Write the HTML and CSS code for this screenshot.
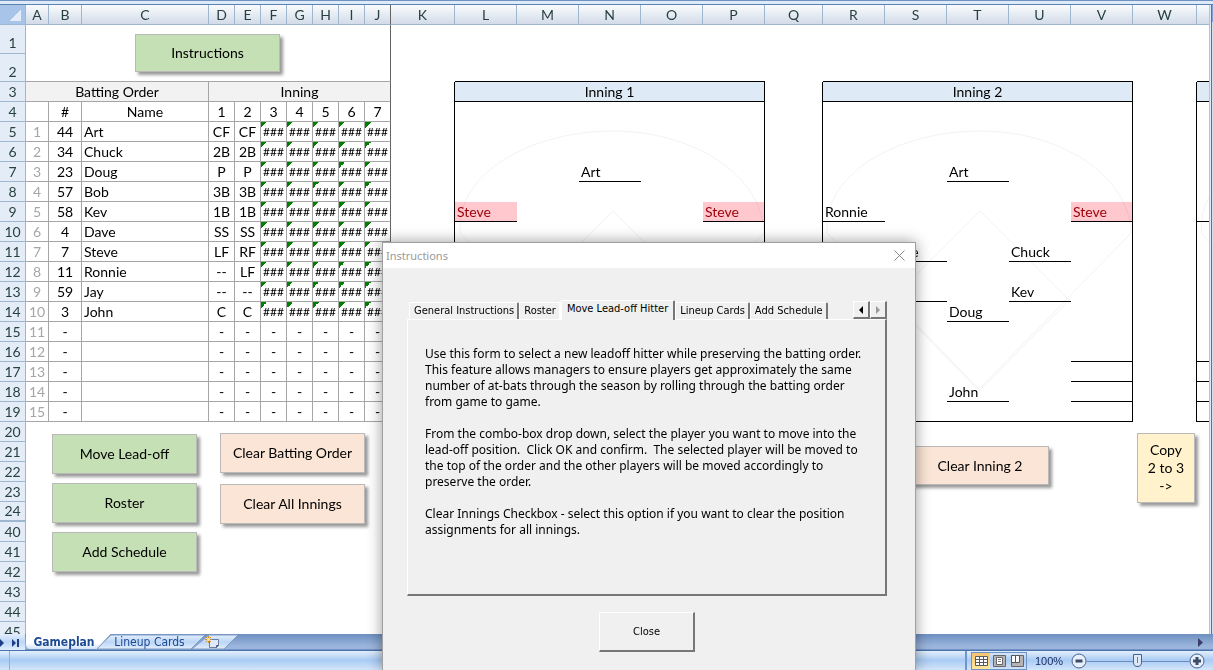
FILE: index.html
```html
<!DOCTYPE html>
<html lang="en">
<head>
<meta charset="utf-8">
<title>Gameplan</title>
<link rel="stylesheet" href="styles.css">
</head>
<body>
<div class="app">
<div class="ribbon-edge"></div>
<main class="workspace">
<div class="sheet">
<table class="grid">
<colgroup>
<col class="w-head"><col class="w-a"><col class="w-b"><col class="w-c">
<col class="w-d"><col class="w-d"><col class="w-d"><col class="w-d"><col class="w-d"><col class="w-d"><col class="w-d">
<col class="w-k"><col class="w-l"><col class="w-l"><col class="w-l"><col class="w-l"><col class="w-l">
<col class="w-q"><col class="w-l"><col class="w-l"><col class="w-l"><col class="w-l"><col class="w-l">
<col class="w-k"><col>
</colgroup>
<thead>
<tr class="cols"><th class="corner"></th><th>A</th><th>B</th><th>C</th><th>D</th><th>E</th><th>F</th><th>G</th><th>H</th><th>I</th><th class="freeze">J</th><th>K</th><th>L</th><th>M</th><th>N</th><th>O</th><th>P</th><th>Q</th><th>R</th><th>S</th><th>T</th><th>U</th><th>V</th><th>W</th><th class="last"></th></tr>
</thead>
<tbody>
<tr class="tall"><th>1</th><td class="freeze" colspan="10"></td><td colspan="14"></td></tr>
<tr class="tall2"><th>2</th><td class="gb freeze" colspan="10"></td><td></td><td class="ul" colspan="5"></td><td></td><td class="ul" colspan="5"></td><td></td><td class="ul"></td></tr>
<tr><th>3</th><td class="g title" colspan="3">Batting Order</td><td class="g title freeze" colspan="7">Inning</td><td class="edge"></td><td class="inning" colspan="5">Inning 1</td><td class="edge"></td><td class="inning" colspan="5">Inning 2</td><td class="edge"></td><td class="inning cut"></td></tr>
<tr><th>4</th><td class="g"></td><td class="g">#</td><td class="g">Name</td><td class="g">1</td><td class="g">2</td><td class="g">3</td><td class="g">4</td><td class="g">5</td><td class="g">6</td><td class="g freeze">7</td><td class="edge"></td><td class="edge" colspan="5"></td><td class="edge"></td><td class="edge" colspan="5"></td><td class="edge"></td><td></td></tr>
<tr><th>5</th><td class="g n">1</td><td class="g">44</td><td class="g nm">Art</td><td class="g">CF</td><td class="g">CF</td><td class="g err">###</td><td class="g err">###</td><td class="g err">###</td><td class="g err">###</td><td class="g err freeze">###</td><td class="edge"></td><td class="edge" colspan="5"></td><td class="edge"></td><td class="edge" colspan="5"></td><td class="edge"></td><td></td></tr>
<tr><th>6</th><td class="g n">2</td><td class="g">34</td><td class="g nm">Chuck</td><td class="g">2B</td><td class="g">2B</td><td class="g err">###</td><td class="g err">###</td><td class="g err">###</td><td class="g err">###</td><td class="g err freeze">###</td><td class="edge"></td><td class="edge" colspan="5"></td><td class="edge"></td><td class="edge" colspan="5"></td><td class="edge"></td><td></td></tr>
<tr><th>7</th><td class="g n">3</td><td class="g">23</td><td class="g nm">Doug</td><td class="g">P</td><td class="g">P</td><td class="g err">###</td><td class="g err">###</td><td class="g err">###</td><td class="g err">###</td><td class="g err freeze">###</td><td class="edge"></td><td colspan="2"></td><td class="pos">Art</td><td class="edge" colspan="2"></td><td class="edge"></td><td colspan="2"></td><td class="pos">Art</td><td class="edge" colspan="2"></td><td class="edge"></td><td></td></tr>
<tr><th>8</th><td class="g n">4</td><td class="g">57</td><td class="g nm">Bob</td><td class="g">3B</td><td class="g">3B</td><td class="g err">###</td><td class="g err">###</td><td class="g err">###</td><td class="g err">###</td><td class="g err freeze">###</td><td class="edge"></td><td class="edge" colspan="5"></td><td class="edge"></td><td class="edge" colspan="5"></td><td class="edge"></td><td></td></tr>
<tr><th>9</th><td class="g n">5</td><td class="g">58</td><td class="g nm">Kev</td><td class="g">1B</td><td class="g">1B</td><td class="g err">###</td><td class="g err">###</td><td class="g err">###</td><td class="g err">###</td><td class="g err freeze">###</td><td class="edge"></td><td class="pos dup">Steve</td><td colspan="3"></td><td class="pos dup edge">Steve</td><td class="edge"></td><td class="pos">Ronnie</td><td colspan="3"></td><td class="pos dup edge">Steve</td><td class="edge"></td><td class="ul"></td></tr>
<tr><th>10</th><td class="g n">6</td><td class="g">4</td><td class="g nm">Dave</td><td class="g">SS</td><td class="g">SS</td><td class="g err">###</td><td class="g err">###</td><td class="g err">###</td><td class="g err">###</td><td class="g err freeze">###</td><td class="edge"></td><td class="edge" colspan="5"></td><td class="edge"></td><td class="edge" colspan="5"></td><td class="edge"></td><td></td></tr>
<tr><th>11</th><td class="g n">7</td><td class="g">7</td><td class="g nm">Steve</td><td class="g">LF</td><td class="g">RF</td><td class="g err">###</td><td class="g err">###</td><td class="g err">###</td><td class="g err">###</td><td class="g err freeze">###</td><td class="edge"></td><td class="edge" colspan="5"></td><td class="edge"></td><td></td><td class="pos">Dave</td><td></td><td class="pos">Chuck</td><td class="edge"></td><td class="edge"></td><td></td></tr>
<tr><th>12</th><td class="g n">8</td><td class="g">11</td><td class="g nm">Ronnie</td><td class="g">--</td><td class="g">LF</td><td class="g err">###</td><td class="g err">###</td><td class="g err">###</td><td class="g err">###</td><td class="g err freeze">###</td><td class="edge"></td><td class="edge" colspan="5"></td><td class="edge"></td><td class="edge" colspan="5"></td><td class="edge"></td><td></td></tr>
<tr><th>13</th><td class="g n">9</td><td class="g">59</td><td class="g nm">Jay</td><td class="g">--</td><td class="g">--</td><td class="g err">###</td><td class="g err">###</td><td class="g err">###</td><td class="g err">###</td><td class="g err freeze">###</td><td class="edge"></td><td class="edge" colspan="5"></td><td class="edge"></td><td></td><td class="pos"></td><td></td><td class="pos">Kev</td><td class="edge"></td><td class="edge"></td><td></td></tr>
<tr><th>14</th><td class="g n">10</td><td class="g">3</td><td class="g nm">John</td><td class="g">C</td><td class="g">C</td><td class="g err">###</td><td class="g err">###</td><td class="g err">###</td><td class="g err">###</td><td class="g err freeze">###</td><td class="edge"></td><td class="edge" colspan="5"></td><td class="edge"></td><td colspan="2"></td><td class="pos">Doug</td><td class="edge" colspan="2"></td><td class="edge"></td><td></td></tr>
<tr><th>15</th><td class="g n">11</td><td class="g">-</td><td class="g"></td><td class="g">-</td><td class="g">-</td><td class="g">-</td><td class="g">-</td><td class="g">-</td><td class="g">-</td><td class="g freeze">-</td><td class="edge"></td><td class="edge" colspan="5"></td><td class="edge"></td><td class="edge" colspan="5"></td><td class="edge"></td><td></td></tr>
<tr><th>16</th><td class="g n">12</td><td class="g">-</td><td class="g"></td><td class="g">-</td><td class="g">-</td><td class="g">-</td><td class="g">-</td><td class="g">-</td><td class="g">-</td><td class="g freeze">-</td><td class="edge"></td><td class="edge" colspan="5"></td><td class="edge"></td><td colspan="4"></td><td class="ul edge"></td><td class="edge"></td><td class="ul"></td></tr>
<tr><th>17</th><td class="g n">13</td><td class="g">-</td><td class="g"></td><td class="g">-</td><td class="g">-</td><td class="g">-</td><td class="g">-</td><td class="g">-</td><td class="g">-</td><td class="g freeze">-</td><td class="edge"></td><td class="edge" colspan="5"></td><td class="edge"></td><td colspan="4"></td><td class="ul edge"></td><td class="edge"></td><td class="ul"></td></tr>
<tr><th>18</th><td class="g n">14</td><td class="g">-</td><td class="g"></td><td class="g">-</td><td class="g">-</td><td class="g">-</td><td class="g">-</td><td class="g">-</td><td class="g">-</td><td class="g freeze">-</td><td class="edge"></td><td class="edge" colspan="5"></td><td class="edge"></td><td colspan="2"></td><td class="pos">John</td><td></td><td class="ul edge"></td><td class="edge"></td><td class="ul"></td></tr>
<tr><th>19</th><td class="g n">15</td><td class="g">-</td><td class="g"></td><td class="g">-</td><td class="g">-</td><td class="g">-</td><td class="g">-</td><td class="g">-</td><td class="g">-</td><td class="g freeze">-</td><td class="edge"></td><td class="ul edge" colspan="5"></td><td class="edge"></td><td class="ul edge" colspan="5"></td><td class="edge"></td><td class="ul"></td></tr>
<tr><th>20</th><td class="freeze" colspan="10"></td><td colspan="14"></td></tr>
<tr><th>21</th><td class="freeze" colspan="10"></td><td colspan="14"></td></tr>
<tr><th>22</th><td class="freeze" colspan="10"></td><td colspan="14"></td></tr>
<tr><th>23</th><td class="freeze" colspan="10"></td><td colspan="14"></td></tr>
<tr><th class="hidden-rows">24</th><td class="freeze" colspan="10"></td><td colspan="14"></td></tr>
<tr><th>40</th><td class="freeze" colspan="10"></td><td colspan="14"></td></tr>
<tr><th>41</th><td class="freeze" colspan="10"></td><td colspan="14"></td></tr>
<tr><th>42</th><td class="freeze" colspan="10"></td><td colspan="14"></td></tr>
<tr><th>43</th><td class="freeze" colspan="10"></td><td colspan="14"></td></tr>
<tr><th>44</th><td class="freeze" colspan="10"></td><td colspan="14"></td></tr>
<tr><th>45</th><td class="freeze" colspan="10"></td><td colspan="14"></td></tr>
</tbody>
</table>

<svg class="field field-1" width="310" height="290" viewBox="0 0 310 290" aria-hidden="true"><path d="M5 132V122C8 70 78 30 158 30S306 74 309 130M5 132L158 288L309 132M158 110L247 199L158 290L69 199Z"/></svg>
<svg class="field field-2" width="310" height="290" viewBox="0 0 310 290" aria-hidden="true"><path d="M4 132V122C7 70 77 30 157 30S305 74 308 130M4 132L156 288L310 130M157 110L246 199L156 290L68 199Z"/></svg>
<svg class="field field-3" width="12" height="290" viewBox="0 0 12 290" aria-hidden="true"><path d="M12 96Q4 110 4 132L12 141"/></svg>

<button class="shape green at-instructions">Instructions</button>
<div class="stack at-green">
<button class="shape green">Move Lead-off</button>
<button class="shape green">Roster</button>
<button class="shape green">Add Schedule</button>
</div>
<div class="stack wide at-orange">
<button class="shape orange">Clear Batting Order</button>
<button class="shape orange">Clear All Innings</button>
</div>
<button class="shape orange at-clear">Clear Inning 2</button>
<button class="shape yellow at-copy">Copy<br>2 to 3<br>-&gt;</button>
</div>
<div class="vscroll"></div>
</main>

<nav class="sheet-tabs">
<svg class="tab-shapes" width="240" height="17" viewBox="0 0 240 17" aria-hidden="true">
<defs>
<linearGradient id="tabBlue" x1="0" y1="0" x2="0" y2="1"><stop offset="0" stop-color="#e3eefc"/><stop offset=".5" stop-color="#bcd6f7"/><stop offset="1" stop-color="#e2eefd"/></linearGradient>
<linearGradient id="tabWhite" x1="0" y1="0" x2="0" y2="1"><stop offset="0" stop-color="#fff"/><stop offset=".6" stop-color="#fff"/><stop offset="1" stop-color="#cfe2fa"/></linearGradient>
</defs>
<path d="M192 15L209 1H238L224 15Z" fill="url(#tabBlue)" stroke="#7f9cc7"/>
<path d="M96 15L111 1H205L191 15Z" fill="url(#tabBlue)" stroke="#7f9cc7"/>
<path d="M26 0H111L97 15H30Q27 15 26 11Z" fill="url(#tabWhite)"/>
<path d="M111 0L97 15" stroke="#7f9cc7"/>
<path d="M0 0H25V16H0Z" fill="url(#tabBlue)"/>
</svg>
<button class="nav" aria-label="Next sheet"><svg width="4" height="8" viewBox="0 0 4 8"><path d="M0 0L4 4L0 8Z" fill="#1d3f86"/></svg></button>
<button class="nav" aria-label="Last sheet"><svg width="8" height="8" viewBox="0 0 8 8"><path d="M0 0L4 4L0 8ZM5 0H7V8H5Z" fill="#1d3f86"/></svg></button>
<button class="tab current">Gameplan</button>
<button class="tab">Lineup Cards</button>
<button class="tab new" aria-label="Insert worksheet"><svg width="16" height="14" viewBox="0 0 16 14"><path d="M4.500 3.500H13.500V9.500L11.500 11.500H4.500Z" fill="#dfe9f8" stroke="#6a7da2"/><path d="M13.500 9.500H11.500V11.500" fill="none" stroke="#46587c"/><path d="M3.500 0V7M0 3.500H7M1 1L6 6M6 1L1 6" stroke="#d98a1d"/><circle cx="3.500" cy="3.500" r="1.500" fill="#fff3b0"/></svg></button>
<span class="hscroll"><svg width="6" height="9" viewBox="0 0 6 9"><path d="M0 0L5 4.500L0 9Z" fill="#3b3e66"/></svg></span>
</nav>

<footer class="status">
<span class="status-left"></span>
<span class="status-mid"></span>
<span class="views">
<button class="on" aria-label="Normal view"><svg width="13" height="10" viewBox="0 0 13 10"><path d="M.5.5H12.500V9.500H.5ZM.5 3.500H12.500M.5 6.500H12.500M4.500.5V9.500M8.500.5V9.500" fill="#fff" stroke="#5a5a5a"/></svg></button>
<button aria-label="Page layout view"><svg width="13" height="12" viewBox="0 0 13 12"><path d="M.5.500H12.500V11.500H.5Z" fill="#b4b4b4" stroke="#666"/><path d="M3.500 2.500H9.500V9.500H3.500Z" fill="#fff" stroke="#666"/><path d="M5 4.500H8M5 6.500H8" stroke="#777"/></svg></button>
<button aria-label="Page break view"><svg width="13" height="12" viewBox="0 0 13 12"><path d="M.5.500H12.500V11.500H.5Z" fill="#b4b4b4" stroke="#666"/><path d="M.5.500H4.500V7.500H.5ZM4.500.500H8.500V7.500H4.500Z" fill="#fff" stroke="#555"/></svg></button>
</span>
<span class="percent">100%</span>
<button class="round" aria-label="Zoom out"><svg width="16" height="16" viewBox="0 0 16 16"><circle cx="8" cy="8" r="7" fill="#e6effb" stroke="#48618c"/><path d="M4.500 8H11.500" stroke="#3c4c68" stroke-width="3"/></svg></button>
<input class="zoom" type="range" min="0" max="100" value="49" aria-label="Zoom">
<button class="round" aria-label="Zoom in"><svg width="16" height="16" viewBox="0 0 16 16"><circle cx="8" cy="8" r="7" fill="#e6effb" stroke="#48618c"/><path d="M4 8H12M8 4V12" stroke="#3c4c68" stroke-width="3"/></svg></button>
</footer>

<section class="dialog" role="dialog" aria-labelledby="dlg-title">
<header class="dialog-bar"><h1 id="dlg-title">Instructions</h1><button aria-label="Close window"><svg width="11" height="11" viewBox="0 0 11 11"><path d="M.5.5L10.500 10.500M10.500.5L.5 10.500" stroke="#888"/></svg></button></header>
<div class="dialog-body">
<div class="tabs">
<button class="dtab">General Instructions</button><button class="dtab flat">Roster</button><button class="dtab active">Move Lead-off Hitter</button><button class="dtab">Lineup Cards</button><button class="dtab">Add Schedule</button>
<span class="spin"><button aria-label="Previous tab"><svg width="4" height="8" viewBox="0 0 4 8"><path d="M4 0L0 4L4 8Z" fill="#000"/></svg></button><button aria-label="Next tab"><svg width="4" height="8" viewBox="0 0 4 8"><path d="M0 0L4 4L0 8Z" fill="#999"/></svg></button></span>
</div>
<div class="panel">
<p>Use this form to select a new leadoff hitter while preserving the batting order.<br>This feature allows managers to ensure players get approximately the same<br>number of at-bats through the season by rolling through the batting order<br>from game to game.</p>
<p>From the combo-box drop down, select the player you want to move into the<br>lead-off position.&nbsp; Click OK and confirm.&nbsp; The selected player will be moved to<br>the top of the order and the other players will be moved accordingly to<br>preserve the order.</p>
<p>Clear Innings Checkbox - select this option if you want to clear the position<br>assignments for all innings.</p>
</div>
<button class="close">Close</button>
</div>
</section>
</div>
</body>
</html>
```
FILE: styles.css
```css
* { box-sizing: border-box; }
body { margin: 0; font: 14px/18px Lato, "Liberation Sans", sans-serif; color: #000; }
button { font: inherit; color: inherit; margin: 0; padding: 0; border: 0; background: none; }
svg { display: block; }
.app { position: relative; height: 100vh; display: flex; flex-direction: column; overflow: hidden; background: #fff; }

.ribbon-edge { flex: none; height: 5px; background: linear-gradient(#6f93c0 1px, #dfeaf8 1px 4px, #5c82b4 4px); }
.workspace { flex: 1; min-height: 0; display: flex; overflow: hidden; }
.sheet { position: relative; flex: 1; min-width: 0; overflow: hidden; }
.vscroll { width: 4px; background: linear-gradient(#7da0d2, #7da0d2) 3px 0 / 1px 17px no-repeat, linear-gradient(90deg, #a8c8ee 0 1px, #dfeaf8 1px 2px, #4f74b4 2px 3px, #d5dcea 3px); }

/* Spreadsheet grid */
.grid { width: 100%; table-layout: fixed; border-collapse: separate; border-spacing: 0; }
.w-head, .w-d { width: 26px; }
.w-a { width: 23px; }
.w-b { width: 33px; }
.w-c { width: 127px; }
.w-k { width: 64px; }
.w-l { width: 62px; }
.w-q { width: 58px; }
.grid td, .grid th { height: 20px; padding: 0; line-height: 18px; text-align: center; font-weight: 400; white-space: nowrap; overflow: hidden; }
.grid th { color: #27413e; background: #e4ecf7; border-right: 1px solid #9eb6ce; border-bottom: 1px solid #9eb6ce; }
.grid .cols th { background: linear-gradient(#f9fcfd, #d3dbe9); }
.grid .cols .corner { background: linear-gradient(135deg, transparent 50%, #e3edfa 50%) 10px 5px / 11px 11px no-repeat, #a9c4e9; }
.grid .cols .last { border-right: 0; }
.grid .freeze, .grid .cols .freeze { border-right: 1px solid #646464; }
.grid .tall th { height: 29px; padding-top: 8px; }
.grid .tall2 th { height: 28px; padding-top: 8px; }
.grid .hidden-rows { border-bottom-width: 2px; }
.g { border-right: 1px solid #a6a6a6; border-bottom: 1px solid #a6a6a6; }
.gb { border-bottom: 1px solid #a6a6a6; }
.title { background: #f2f2f2; }
.n { color: #a6a6a6; }
.grid .nm { text-align: left; padding-left: 2px; }
.err { background: linear-gradient(135deg, #008000 50%, transparent 50%) 0 0 / 6px 6px no-repeat; font-size: 12px; }
.edge { border-right: 1px solid #000; }
.ul { border-bottom: 1px solid #000; }
.inning { background: #deeaf6; border-right: 1px solid #000; border-bottom: 1px solid #000; }
.inning.cut { border-right: 0; }
.grid .pos { text-align: left; padding-left: 2px; border-bottom: 1px solid #000; }
.dup { background: #ffc7ce; color: #9c0006; }

/* Drawn objects placed freely on the sheet */
.field { position: absolute; top: 96px; fill: none; stroke: #f2f2f2; mix-blend-mode: multiply; }
.field-1 { left: 455px; }
.field-2 { left: 823px; }
.field-3 { left: 1197px; }
.shape { border: 1px solid #b9b9b9; box-shadow: 3px 3px 3px rgba(0, 0, 0, .4); width: 145px; height: 40px; }
.green { background: #c5e0b4; }
.orange { background: #fbe5d6; }
.yellow { background: #fff2cc; }
.stack { position: absolute; display: flex; flex-direction: column; gap: 9px; }
.stack.wide { gap: 11px; }
.at-instructions { position: absolute; left: 135px; top: 29px; height: 38px; }
.at-green { left: 52px; top: 429px; }
.at-orange { left: 220px; top: 428px; }
.at-clear { position: absolute; left: 911px; top: 441px; width: 138px; height: 39px; }
.at-copy { position: absolute; left: 1137px; top: 428px; width: 58px; height: 70px; }

/* Sheet tabs */
.sheet-tabs { position: relative; flex: none; display: flex; align-items: center; height: 17px; background: linear-gradient(#6d8fc0, #9bb5dc 12px, #9bb5dc 15px, #4a72ad 16px); font: 12px/15px "DejaVu Sans Condensed", "Noto Sans", sans-serif; color: #1c4a94; }
.tab-shapes { position: absolute; left: 0; top: 0; }
.sheet-tabs button { position: relative; }
.nav { width: 12px; display: flex; }
.tab.current { font-weight: 700; width: 80px; }
.tab { width: 91px; }
.tab.new { width: 36px; display: flex; justify-content: center; }
.hscroll { margin-left: auto; padding-right: 9px; }

/* Status bar */
.status { flex: none; display: flex; align-items: center; height: 19px; background: linear-gradient(#e3effd, #c4dcf8 5px, #a9cbf4 9px, #d4e5fa); font: 11px/14px "Liberation Sans", sans-serif; color: #1a2f66; }
.status-left { width: 10px; height: 19px; border-right: 1px solid #8fb0dd; }
.status-mid { flex: 1; height: 19px; border-right: 2px solid #6f97ce; margin-right: 4px; }
.views { display: flex; border: 1px solid #6f93c6; height: 18px; }
.views button { width: 18px; display: flex; align-items: center; justify-content: center; }
.views .on { background: linear-gradient(#f7c26f, #ffe79b); }
.percent { width: 44px; text-align: center; }
.round { width: 16px; }
.zoom { appearance: none; width: 102px; height: 16px; margin: 0; background: linear-gradient(#6b8cbd, #6b8cbd) 0 8px / 100% 1px no-repeat; }
.zoom::-webkit-slider-thumb { appearance: none; width: 9px; height: 13px; background: linear-gradient(#6680a8, #6680a8) 3px 2px / 1px 6px no-repeat, #dce8f8; border: 1px solid #48618c; border-radius: 1px 1px 5px 5px; }
.status .round:last-child { margin-right: 8px; }

/* Dialog */
.dialog { position: absolute; left: 382px; top: 242px; bottom: 0; width: 534px; display: flex; flex-direction: column; background: #f0f0f0; border: 1px solid #a0a0a0; border-bottom: 0; box-shadow: 0 0 14px rgba(0, 0, 0, .4); font: 11px/14px "DejaVu Sans Condensed", "Noto Sans", sans-serif; }
.dialog-bar { display: flex; align-items: center; justify-content: space-between; height: 25px; padding: 0 10px 0 3px; background: #fff; }
.dialog-bar h1 { margin: 0; font: 11px/16px "Noto Sans", sans-serif; color: #999; }
.dialog-body { display: flex; flex-direction: column; padding: 32px 28px 0 24px; }
.tabs { display: flex; align-items: flex-end; height: 19px; padding-left: 2px; }
.dtab { height: 17px; white-space: nowrap; padding: 0 3px 0 4px; margin-right: 0; border: solid; border-width: 1px 2px 0 1px; border-color: #fff #777 #fff #fff; border-radius: 2px 2px 0 0; }
.dtab.flat { border-right-color: #fff; }
.dtab.active { position: relative; z-index: 1; height: 20px; margin: 0 0 -1px; padding: 0 5px 3px; background: #f0f0f0; }
.spin { margin-left: auto; display: flex; }
.spin button { width: 17px; height: 18px; display: flex; align-items: center; justify-content: center; border: solid; border-width: 1px 2px 2px 1px; border-color: #fff #777 #777 #fff; }
.panel { height: 277px; padding: 26px 0 0 17px; border: solid; border-width: 1px 2px 2px 1px; border-color: #fff #777 #777 #fff; font: 12px/16px "Noto Sans", sans-serif; white-space: nowrap; }
.panel p { margin: 0 0 16px; }
.close { align-self: center; width: 96px; height: 40px; margin-top: 16px; border: solid; border-width: 1px 2px 2px 1px; border-color: #fff #777 #777 #fff; }
```
